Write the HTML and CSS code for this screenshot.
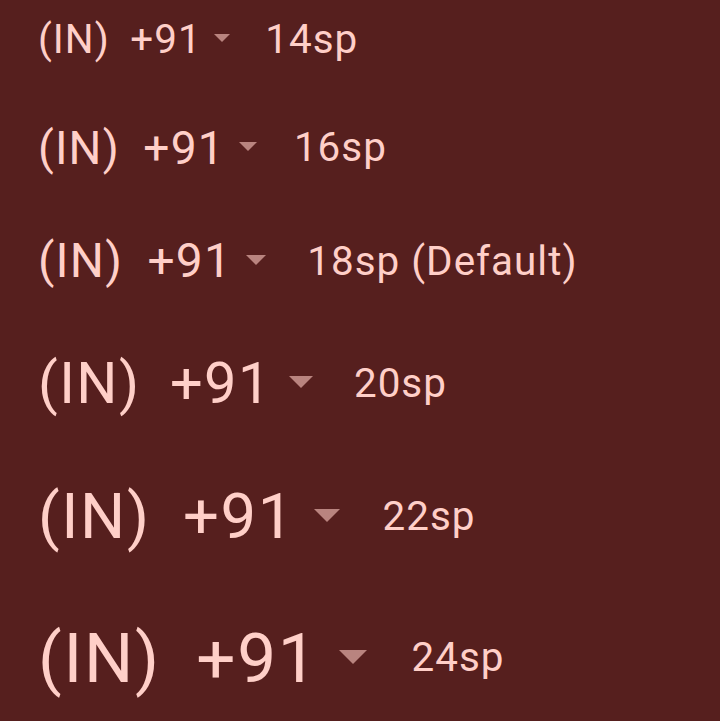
FILE: index.html
```html
<!DOCTYPE html>
<html lang="en">
<head>
<meta charset="utf-8">
<title>Country code picker text sizes</title>
<link rel="stylesheet" href="styles.css">
</head>
<body>
<main class="list">
  <div class="row s14"><span class="cc">(IN)</span><span class="dial">+91</span><span class="arrow"></span><span class="label">14sp</span></div>
  <div class="row s16"><span class="cc">(IN)</span><span class="dial">+91</span><span class="arrow"></span><span class="label">16sp</span></div>
  <div class="row s18"><span class="cc">(IN)</span><span class="dial">+91</span><span class="arrow"></span><span class="label">18sp (Default)</span></div>
  <div class="row s20"><span class="cc">(IN)</span><span class="dial">+91</span><span class="arrow"></span><span class="label">20sp</span></div>
  <div class="row s22"><span class="cc">(IN)</span><span class="dial">+91</span><span class="arrow"></span><span class="label">22sp</span></div>
  <div class="row s24"><span class="cc">(IN)</span><span class="dial">+91</span><span class="arrow"></span><span class="label">24sp</span></div>
</main>
</body>
</html>
```

FILE: styles.css
```css
html, body {
  margin: 0;
  background: #561f1e;
}

body {
  font-family: Roboto, "Noto Sans", "Liberation Sans", sans-serif;
  color: #ffcfc8;
  width: 720px;
  height: 721px;
  overflow: hidden;
}

.list {
  display: flex;
  flex-direction: column;
  gap: 46.3px;
  padding: 10.5px 0 0 38px;
}

.row {
  display: flex;
  align-items: center;
  line-height: 1.435;
  letter-spacing: 0.025em;
  white-space: nowrap;
}

.s14 { font-size: 40.4px; }
.s16 { font-size: 46.1px; }
.s18 { font-size: 47.9px; }
.s20 { font-size: 57.7px; }
.s22 { font-size: 63.4px; }
.s24 { font-size: 69.2px; }

.dial {
  margin-left: 0.51em;
}

.arrow {
  width: 0;
  height: 0;
  border-left: 0.209em solid transparent;
  border-right: 0.209em solid transparent;
  border-top: 0.209em solid #b9847f;
  margin-left: 0.3em;
  margin-right: calc(23px + 0.31em);
  margin-bottom: 0.05em;
}

.s18 .arrow {
  margin-right: calc(26px + 0.31em);
}

.label {
  font-size: 40.4px;
  letter-spacing: 0.025em;
}
```
